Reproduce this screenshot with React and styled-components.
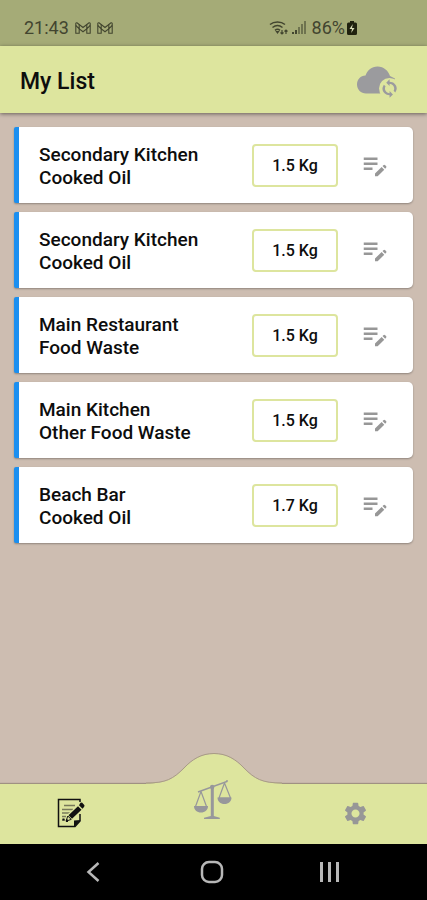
import { useState } from "react";
import styled, { createGlobalStyle } from "styled-components";
import { MdEditNote, MdSettings } from "react-icons/md";

const GlobalStyle = createGlobalStyle`
  * {
    box-sizing: border-box;
  }
  body {
    margin: 0;
    font-family: Roboto, "Liberation Sans", sans-serif;
    color: #0d0d0d;
  }
  button {
    padding: 0;
    border: none;
    background: none;
    font-family: inherit;
    color: inherit;
    cursor: pointer;
  }
  svg {
    display: block;
  }
`;

const Screen = styled.div`
  min-height: 100vh;
  display: flex;
  flex-direction: column;
  background-color: #cdbdb1;
`;

const StatusBar = styled.div`
  height: 46px;
  padding: 10px 70px 0 24px;
  display: flex;
  align-items: center;
  justify-content: space-between;
  background-color: #a5ab77;
  color: #42452f;
  font-size: 18px;
  line-height: 24px;
`;
const StatusGroup = styled.div`
  display: flex;
  align-items: center;
  gap: ${({ $gap }) => $gap}px;
`;

const Header = styled.header`
  height: 67px;
  padding: 4px 28px 0 20px;
  display: flex;
  align-items: center;
  justify-content: space-between;
  background-color: #dde59e;
  box-shadow: 0 1px 4px rgba(0, 0, 0, 0.5);
`;
const Title = styled.h1`
  margin: 0;
  font-size: 23px;
  line-height: 28px;
  font-weight: 500;
`;

const List = styled.ul`
  flex: 1;
  margin: 0;
  padding: 14px;
  display: flex;
  flex-direction: column;
  gap: 9px;
  list-style: none;
`;
const Card = styled.li`
  min-height: 76px;
  padding: 0 23px 0 20px;
  display: flex;
  align-items: center;
  background-color: #fff;
  border-left: 5px solid #1b8ff0;
  border-radius: 2px 5px 5px 2px;
  box-shadow: 0 1px 2px rgba(0, 0, 0, 0.3);
`;
const CardText = styled.div`
  flex: 1;
  padding-top: 1px;
  font-size: 19px;
  line-height: 23px;
  font-weight: 500;
`;
const Weight = styled.div`
  width: 86px;
  height: 43px;
  display: flex;
  align-items: center;
  justify-content: center;
  border: 2px solid #dde59e;
  border-radius: 4px;
  font-size: 16px;
  font-weight: 500;
`;
const EditButton = styled.button`
  margin-left: 22px;
  color: #979797;
`;

const NavBar = styled.nav`
  position: relative;
  height: 60px;
  display: grid;
  grid-template-columns: repeat(3, 1fr);
  grid-template-rows: 60px;
  background-color: #dde59e;
  box-shadow: 0 -1px 1px rgba(90, 80, 60, 0.4);
`;
const NavBump = styled.svg`
  position: absolute;
  left: 50%;
  bottom: 100%;
  transform: translateX(-50%);
`;
const NavButton = styled.button`
  position: relative;
  display: flex;
  align-items: center;
  justify-content: center;
  padding-bottom: ${({ $raised }) => ($raised ? "28px" : "2px")};
  color: #979797;
`;

const SystemBar = styled.div`
  height: 56px;
  padding-right: 4px;
  display: grid;
  grid-template-columns: 1fr 52px 1fr;
  align-items: center;
  background-color: #000;
`;
const SystemButton = styled.button`
  height: 54px;
  display: flex;
  align-items: center;
  justify-content: center;
`;

const items = [
  { id: 1, place: "Secondary Kitchen", type: "Cooked Oil", weight: "1.5 Kg" },
  { id: 2, place: "Secondary Kitchen", type: "Cooked Oil", weight: "1.5 Kg" },
  { id: 3, place: "Main Restaurant", type: "Food Waste", weight: "1.5 Kg" },
  { id: 4, place: "Main Kitchen", type: "Other Food Waste", weight: "1.5 Kg" },
  { id: 5, place: "Beach Bar", type: "Cooked Oil", weight: "1.7 Kg" },
];

const MailIcon = () => (
  <svg width="16" height="12" viewBox="0 0 16 12" fill="none" stroke="currentColor" strokeWidth="1.1">
    <path d="M.8 11.200V1.500q0-.9 1.200-.7L8 5.500 14 .8q1.200-.2 1.200.7v9.700h-3.400V6.800L8 9.800 4.200 6.800v4.400z" />
    <path d="M.8 3.500 4.200 6.800V2.500M15.200 3.500l-3.400 3.300V2.500" />
  </svg>
);

const WifiIcon = () => (
  <svg width="20" height="16" viewBox="0 0 20 16" fill="none" stroke="currentColor" strokeWidth="1.500">
    <path d="M1 4.500c4-3.500 11-3.500 15 0M3.500 7.500c3-2.500 7-2.500 10 0M6 10.300c1.500-1.200 3.500-1.200 5 0" />
    <path d="M7.500 11.500h2l-1 1.500zM13 10v4m-1.500-1.500L13 14l1.500-1.500M17 14v-4m-1.500 1.500L17 10l1.500 1.500" strokeWidth="1.200" />
  </svg>
);

const SignalIcon = () => (
  <svg width="14" height="14" viewBox="0 0 14 14" fill="currentColor">
    <path d="M0 11h2v2H0zM3 9h2v4H3z" />
    <path d="M6 6h2v7H6zM9 3h2v10H9zM12 0h2v13h-2z" opacity="0.550" />
  </svg>
);

const BatteryIcon = () => (
  <svg width="10" height="14" viewBox="0 0 10 14">
    <path d="M3 0h4v1.500h1.500Q10 1.500 10 3v9.500q0 1.500-1.500 1.500h-7Q0 14 0 12.500V3q0-1.500 1.500-1.500H3z" fill="#20220f" />
    <path d="M5.800 3 2.500 8H5l-.8 4L7.500 7H5z" fill="#d9ddb8" />
  </svg>
);

const CloudSyncIcon = () => (
  <svg width="42" height="34" viewBox="0 0 42 34">
    <path
      d="M9 28.500C4 28.500 0 24.500 0 19.500c0-5 3.500-8.800 8.500-9C10.500 5 14.500 1.500 20.500 1.500c6.500 0 11 4.500 12.500 9.500l5 2.500L30 28.500z"
      fill="#9b9b9e"
    />
    <circle cx="32.500" cy="23.500" r="10.500" fill="#dde59e" />
    <path
      transform="translate(22.500 13.500) scale(0.84)"
      fill="#9b9b9e"
      d="M12 4V1L8 5l4 4V6.500c3 0 5.500 2.500 5.500 5.500 0 1-.25 1.900-.7 2.700l2 2C19.600 15.300 20.500 13.700 20.500 12c0-4.600-3.900-8-8.500-8zm0 13.500c-3 0-5.500-2.500-5.500-5.500 0-1 .25-1.900.7-2.700l-2-2C4.400 8.700 3.500 10.300 3.500 12c0 4.600 3.900 8 8.500 8v3l4-4-4-4z"
    />
  </svg>
);

const NoteIcon = () => (
  <svg width="28" height="30" viewBox="0 0 28 30">
    <path d="M23 4V1.500H1.500v27H18l5-5.500V16" fill="none" stroke="#111" strokeWidth="1.500" />
    <path d="M23.500 22 17 29v-6.500z" fill="#111" />
    <path d="M7 7.500h11M5 11.500h11M5 15h8M5 18.500h4M5 22h3" stroke="#77795a" strokeWidth="1.500" />
    <path d="m8 23 2.500-6.500L20.500 7l4.500 4-10.500 10z" fill="#dde59e" />
    <path d="m11.500 17.200 9.500-9 3.500 3.500-9.500 9zM22 7.200l1.500-2.400 1.500-.3 2.500 2.700-.3 1.500-1.700 2z" fill="#111" />
    <path d="m10.800 18 3.400 3.400L9 23.200z" fill="none" stroke="#111" />
    <path d="M5.500 20.500h2v2h-2zM9 21.500h2V24H9z" fill="#111" />
  </svg>
);

const ScalesIcon = () => (
  <svg width="38" height="42" viewBox="1 0 38 42" fill="#97979b">
    <path d="M17.800 7.500h3V37l6 1.800V40H11v-1.200l6.800-1.800z" />
    <circle cx="19.200" cy="8" r="2.200" />
    <path d="m5 13 29-10.500v-1.500" fill="none" stroke="#97979b" strokeWidth="1.400" />
    <path d="m8 12.500-5.500 15h11zM31.500 4 26 19h11.500z" fill="none" stroke="#97979b" strokeWidth="1.200" strokeLinejoin="round" />
    <path d="M1 27h14c0 4-3 6.500-7 6.500S1 31 1 27zM24.500 18.500h14c0 4-3 6.500-7 6.500s-7-2.500-7-6.500z" />
  </svg>
);

function App() {
  const [tab, setTab] = useState("list");

  return (
    <>
      <GlobalStyle />
      <Screen>
        <StatusBar>
          <StatusGroup $gap={6}>
            <span>21:43</span>
            <MailIcon />
            <MailIcon />
          </StatusGroup>
          <StatusGroup $gap={6}>
            <StatusGroup $gap={3}>
              <WifiIcon />
              <SignalIcon />
            </StatusGroup>
            <StatusGroup $gap={2}>
              <span>86%</span>
              <BatteryIcon />
            </StatusGroup>
          </StatusGroup>
        </StatusBar>
        <Header>
          <Title>My List</Title>
          <button type="button" aria-label="Sync">
            <CloudSyncIcon />
          </button>
        </Header>
        <List>
          {items.map(({ id, place, type, weight }) => (
            <Card key={id}>
              <CardText>
                <div>{place}</div>
                <div>{type}</div>
              </CardText>
              <Weight>{weight}</Weight>
              <EditButton type="button" aria-label={`Edit ${place}`}>
                <MdEditNote size={30} />
              </EditButton>
            </Card>
          ))}
        </List>
        <NavBar>
          <NavBump width="136" height="32" viewBox="0 0 136 32">
            <path
              d="M0 31.500c20 0 27-4 38-15C46 8 55 2 68 2s22 6 30 14.500c11 11 18 15 38 15V32H0z"
              fill="#dde59e"
            />
            <path
              d="M0 31c20 0 27-4 38-15C46 7.500 55 1.500 68 1.500s22 6 30 14.500c11 11 18 15 38 15"
              fill="none"
              stroke="#a89c85"
            />
          </NavBump>
          <NavButton type="button" aria-label="List" aria-pressed={tab === "list"} onClick={() => setTab("list")}>
            <NoteIcon />
          </NavButton>
          <NavButton
            type="button"
            aria-label="Weigh"
            aria-pressed={tab === "weigh"}
            onClick={() => setTab("weigh")}
            $raised
          >
            <ScalesIcon />
          </NavButton>
          <NavButton
            type="button"
            aria-label="Settings"
            aria-pressed={tab === "settings"}
            onClick={() => setTab("settings")}
          >
            <MdSettings size={27} />
          </NavButton>
        </NavBar>
        <SystemBar>
          <SystemButton type="button" aria-label="Back">
            <svg width="14" height="22" viewBox="0 0 14 22" fill="none" stroke="#b8b8b8" strokeWidth="2.500">
              <path d="M12.500 2 2.500 11l10 9" />
            </svg>
          </SystemButton>
          <SystemButton type="button" aria-label="Home">
            <svg width="24" height="24" viewBox="0 0 24 24" fill="none" stroke="#b8b8b8" strokeWidth="2.500">
              <rect x="2" y="2" width="20" height="20" rx="7" />
            </svg>
          </SystemButton>
          <SystemButton type="button" aria-label="Recent apps">
            <svg width="20" height="20" viewBox="0 0 20 20" fill="#b8b8b8">
              <path d="M0 0h3v20H0zM8 0h3v20H8zM16 0h3v20h-3z" />
            </svg>
          </SystemButton>
        </SystemBar>
      </Screen>
    </>
  );
}

export default App;
